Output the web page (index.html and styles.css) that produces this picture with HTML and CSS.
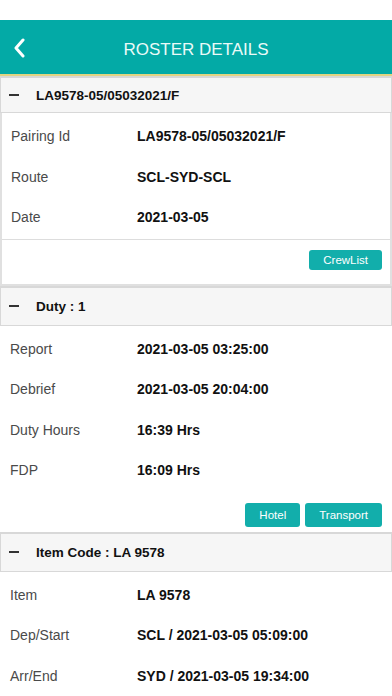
FILE: index.html
```html
<!DOCTYPE html>
<html lang="en">
<head>
  <meta charset="UTF-8" />
  <meta name="viewport" content="width=device-width, initial-scale=1.0" />
  <title>Roster Details</title>
  <link rel="stylesheet" href="styles.css">
</head>
<body>
  <div class="status"></div>

  <header class="topbar">
    <svg class="back" width="14" height="20" viewBox="0 0 14 20">
      <path d="M10 2 L3 10 L10 18" fill="none" stroke="#ffffff" stroke-width="3" stroke-linecap="round" stroke-linejoin="round" />
    </svg>
    <h1>ROSTER DETAILS</h1>
  </header>

  <section class="group">
    <div class="group-head group-head-first"><span class="minus"></span>LA9578-05/05032021/F</div>
    <div class="card">
      <div class="rows">
        <div class="row"><span class="label">Pairing Id</span><span class="value">LA9578-05/05032021/F</span></div>
        <div class="row"><span class="label">Route</span><span class="value">SCL-SYD-SCL</span></div>
        <div class="row"><span class="label">Date</span><span class="value">2021-03-05</span></div>
      </div>
      <div class="actions actions-boxed">
        <button class="btn btn-small">CrewList</button>
      </div>
    </div>
  </section>

  <section class="group">
    <div class="group-head"><span class="minus"></span>Duty : 1</div>
    <div class="rows">
      <div class="row"><span class="label">Report</span><span class="value">2021-03-05 03:25:00</span></div>
      <div class="row"><span class="label">Debrief</span><span class="value">2021-03-05 20:04:00</span></div>
      <div class="row"><span class="label">Duty Hours</span><span class="value">16:39 Hrs</span></div>
      <div class="row"><span class="label">FDP</span><span class="value">16:09 Hrs</span></div>
    </div>
    <div class="actions">
      <button class="btn">Hotel</button>
      <button class="btn">Transport</button>
    </div>
  </section>

  <section class="group">
    <div class="group-head"><span class="minus"></span>Item Code : LA 9578</div>
    <div class="rows">
      <div class="row"><span class="label">Item</span><span class="value">LA 9578</span></div>
      <div class="row"><span class="label">Dep/Start</span><span class="value">SCL / 2021-03-05 05:09:00</span></div>
      <div class="row"><span class="label">Arr/End</span><span class="value">SYD / 2021-03-05 19:34:00</span></div>
    </div>
  </section>
</body>
</html>
```

FILE: styles.css
```css
body {
  font-family: "Liberation Sans", Arial, sans-serif;
  margin: 0;
  padding: 0;
  width: 392px;
  height: 696px;
  overflow: hidden;
  background: #ffffff;
  color: #111111;
}
.status {
  height: 20px;
}
.topbar {
  display: flex;
  align-items: center;
  height: 54px;
  background-color: #03aaa6;
  border-bottom: 2px solid #e2d482;
  padding-left: 13px;
}
.back {
  display: block;
  margin-top: 1px;
}
.topbar h1 {
  flex: 1;
  margin: 0 27px 0 0;
  padding-top: 5px;
  text-align: center;
  font-size: 17px;
  font-weight: normal;
  color: #eafaf8;
}
.group-head {
  display: flex;
  align-items: center;
  box-sizing: border-box;
  height: 40px;
  background-color: #f6f6f6;
  border: 1px solid #d8d8d8;
  border-top-width: 2px;
  border-bottom-width: 1px;
  font-size: 13.5px;
  font-weight: bold;
  color: #111;
}
.group-head-first {
  height: 37px;
}
.minus {
  display: inline-block;
  width: 10px;
  height: 2px;
  background-color: #333;
  margin: 0 17px 0 8px;
}
.card {
  border: 2px solid #e0e0e0;
  border-top: none;
}
.rows {
  padding: 3px 0 1px 0;
}
.row {
  display: grid;
  grid-template-columns: 127px 1fr;
  align-items: center;
  height: 40.5px;
  padding-left: 10px;
  font-size: 14px;
}
.card .row {
  grid-template-columns: 126px 1fr;
  padding-left: 9px;
}
.label {
  color: #4a4a4a;
}
.value {
  font-weight: bold;
  color: #111;
}
.actions {
  display: flex;
  justify-content: flex-end;
  gap: 5px;
  padding: 11px 10px 5px 10px;
}
.actions-boxed {
  border-top: 1px solid #dddddd;
  padding: 10px 8px 14px 8px;
}
.btn {
  font-family: "Liberation Sans", Arial, sans-serif;
  font-size: 11.5px;
  height: 24px;
  padding: 0 14px;
  border: none;
  border-radius: 3px;
  background-color: #12aeab;
  color: #ffffff;
}
.btn-small {
  height: 20px;
}
```
